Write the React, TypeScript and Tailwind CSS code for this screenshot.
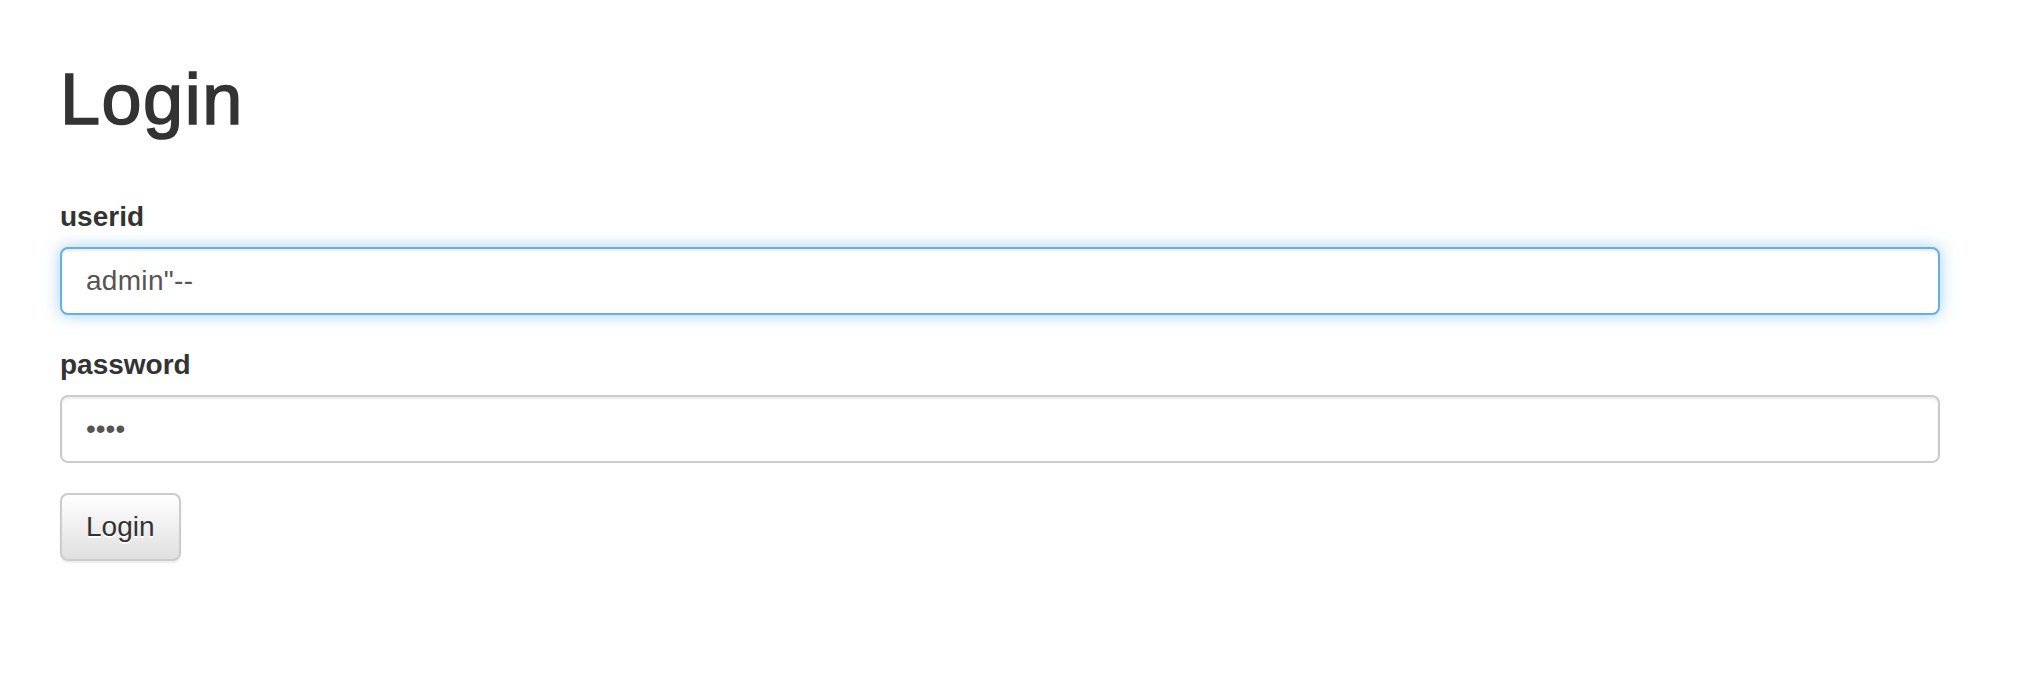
import React from "react";

export default function App() {
  return (
    <div
      className="min-h-[684px] bg-white pl-[60px] pr-[98px] pt-[60px] text-[#333]"
      style={{ fontFamily: '"Liberation Sans", Arial, Helvetica, sans-serif' }}
    >
      <h1 className="mb-[58px] text-[72px] font-normal leading-[79px] tracking-[1.5px] [-webkit-text-stroke:1.6px_#333]">Login</h1>
      <form onSubmit={(e) => e.preventDefault()}>
        <div className="mb-[30px]">
          <label className="mb-[10px] block text-[28px] font-bold leading-[40px]">userid</label>
          <input
            type="text"
            readOnly
            value={'admin"--'}
            className="block h-[68px] w-full rounded-[8px] border-2 border-[#66afe9] bg-white px-[24px] py-[12px] text-[28px] leading-[40px] tracking-[0.3px] text-[#555] shadow-[inset_0_2px_2px_rgba(0,0,0,0.075),0_0_16px_rgba(102,175,233,0.6)] outline-none"
          />
        </div>
        <div className="mb-[30px]">
          <label className="mb-[10px] block text-[28px] font-bold leading-[40px]">password</label>
          <input
            type="password"
            readOnly
            value="pass"
            className="block h-[68px] w-full rounded-[8px] border-2 border-[#ccc] bg-white px-[24px] py-[12px] text-[28px] leading-[40px] text-[#555] shadow-[inset_0_2px_2px_rgba(0,0,0,0.075)] outline-none"
          />
        </div>
        <button
          type="submit"
          className="h-[68px] rounded-[8px] border-2 border-[#ccc] bg-gradient-to-b from-white to-[#e0e0e0] px-[24px] py-[12px] text-[28px] leading-[40px] text-[#333] shadow-[inset_0_2px_0_rgba(255,255,255,0.15),0_2px_2px_rgba(0,0,0,0.075)] [text-shadow:0_2px_0_#fff]"
        >
          Login
        </button>
      </form>
    </div>
  );
}
